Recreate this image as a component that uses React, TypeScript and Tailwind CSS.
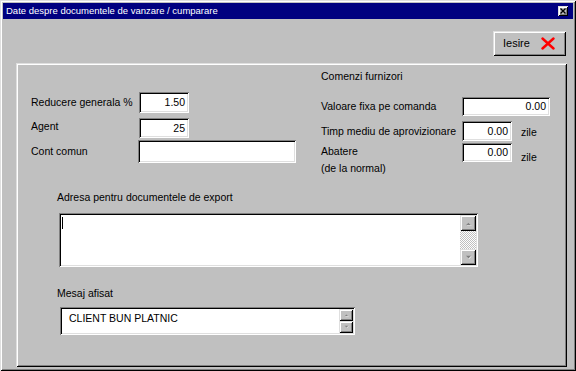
import React from "react";

const raised =
  "shadow-[inset_1px_1px_0_#dfdfdf,inset_-1px_-1px_0_#000000,inset_2px_2px_0_#ffffff,inset_-2px_-2px_0_#808080]";
const sunken =
  "shadow-[inset_1px_1px_0_#808080,inset_-1px_-1px_0_#ffffff,inset_2px_2px_0_#000000,inset_-2px_-2px_0_#dfdfdf]";

function Field({ w, h, value }: { w: string; h: string; value?: string }) {
  return (
    <div className={`${w} ${h} bg-white ${sunken} flex items-center justify-end pr-[4px] shrink-0`}>
      <span className="leading-none">{value}</span>
    </div>
  );
}

function Arrow({ up, size = 7 }: { up: boolean; size?: number }) {
  return (
    <svg width={size} height={Math.ceil(size / 2) + 1} viewBox="0 0 8 5">
      {up ? (
        <>
          <polygon points="1,4.5 7,4.5 4,1.5" fill="#ffffff" transform="translate(0.6,0.6)" />
          <polygon points="1,4.5 7,4.5 4,1.5" fill="#808080" />
        </>
      ) : (
        <>
          <polygon points="1,0.5 7,0.5 4,3.5" fill="#ffffff" transform="translate(0.6,0.6)" />
          <polygon points="1,0.5 7,0.5 4,3.5" fill="#808080" />
        </>
      )}
    </svg>
  );
}

export default function App() {
  return (
    <div
      className={`w-[576px] h-[371px] bg-[#c0c0c0] ${raised} p-[3px] flex flex-col text-black`}
      style={{ fontFamily: '"Liberation Sans", Arial, sans-serif', fontSize: "10.5px" }}
    >
      {/* Title bar */}
      <div className="h-[16px] bg-[#000080] flex items-center justify-between pl-[3px] pr-[5px] shrink-0">
        <span className="text-white leading-none text-[9.5px]">Date despre documentele de vanzare / cumparare</span>
        <div className={`w-[10px] h-[10px] bg-[#c0c0c0] ${raised} flex items-center justify-center`}>
          <svg width="6" height="6" viewBox="0 0 6 6">
            <path d="M0.5 0.5 L5.5 5.5 M5.5 0.5 L0.5 5.5" stroke="#000" strokeWidth="1.4" />
          </svg>
        </div>
      </div>

      {/* Button row */}
      <div className="flex justify-end pr-[7px] mt-[12px] shrink-0">
        <div className={`w-[73px] h-[25px] ${raised} flex items-center pl-[10px]`}>
          <span className="text-[11px] leading-none">Iesire</span>
          <svg className="ml-[11px]" width="14" height="13" viewBox="0 0 14 13">
            <path d="M1.5 1.5 L12.5 11.5 M12.5 1.5 L1.5 11.5" stroke="#ff0000" strokeWidth="2.4" strokeLinecap="round" />
          </svg>
        </div>
      </div>

      {/* Group panel */}
      <div className={`mt-[7px] ml-[13px] mr-[6px] mb-[1px] flex-1 ${raised} p-[2px] flex flex-col`}>
        {/* top section */}
        <div className="h-[112px] flex shrink-0">
          {/* left column */}
          <div className="ml-[13px] mt-[27px] w-[265px] flex flex-col">
            <div className="flex items-center">
              <span className="w-[108px] leading-none">Reducere generala %</span>
              <Field w="w-[50px]" h="h-[21px]" value="1.50" />
            </div>
            <div className="flex items-center mt-[5px]">
              <span className="w-[108px] leading-none -mt-[4px]">Agent</span>
              <Field w="w-[50px]" h="h-[20px]" value="25" />
            </div>
            <div className="flex items-center mt-[2px]">
              <span className="w-[107px] leading-none">Cont comun</span>
              <Field w="w-[158px]" h="h-[23px]" />
            </div>
          </div>

          {/* right column */}
          <div className="ml-[25px] mt-[5px] flex flex-col">
            <div className="h-[12px] leading-[12px]">Comenzi furnizori</div>
            <div className="flex items-center mt-[15px]">
              <span className="w-[141px] leading-none">Valoare fixa pe comanda</span>
              <Field w="w-[88px]" h="h-[19px]" value="0.00" />
            </div>
            <div className="flex items-center mt-[5px]">
              <span className="w-[141px] leading-none">Timp mediu de aprovizionare</span>
              <Field w="w-[50px]" h="h-[20px]" value="0.00" />
              <span className="ml-[9px] leading-none mt-[2px]">zile</span>
            </div>
            <div className="flex items-start mt-[2px]">
              <div className="w-[141px] leading-[17px] mt-[0px]">
                <div>Abatere</div>
                <div>(de la normal)</div>
              </div>
              <Field w="w-[50px]" h="h-[19px]" value="0.00" />
              <span className="ml-[9px] leading-none mt-[9px]">zile</span>
            </div>
          </div>
        </div>

        {/* Adresa */}
        <div className="ml-[39px] mt-[14px] leading-[12px]">Adresa pentru documentele de export</div>
        <div className={`ml-[41px] mt-[10px] w-[419px] h-[54px] bg-white ${sunken} flex p-[2px]`}>
          <div className="flex-1 relative">
            <span className="absolute left-[1px] top-[2px] w-[1px] h-[12px] bg-black" />
          </div>
          <div className="w-[16px] flex flex-col">
            <div className={`h-[16px] bg-[#c0c0c0] ${raised} flex items-center justify-center`}>
              <Arrow up />
            </div>
            <div className="flex-1 bg-[image:repeating-conic-gradient(#c0c0c0_0%_25%,#ffffff_0%_50%)] bg-[length:2px_2px]" />
            <div className={`h-[16px] bg-[#c0c0c0] ${raised} flex items-center justify-center`}>
              <Arrow up={false} />
            </div>
          </div>
        </div>

        {/* Mesaj */}
        <div className="ml-[39px] mt-[20px] leading-[12px]">Mesaj afisat</div>
        <div className={`ml-[42px] mt-[8px] w-[295px] h-[28px] bg-white ${sunken} flex p-[2px]`}>
          <div className="flex-1 pl-[7px] pt-[4px] leading-none">CLIENT BUN PLATNIC</div>
          <div className="w-[14px] flex flex-col">
            <div className={`h-[12px] bg-[#c0c0c0] ${raised} flex items-center justify-center`}>
              <Arrow up size={5} />
            </div>
            <div className={`h-[12px] bg-[#c0c0c0] ${raised} flex items-center justify-center`}>
              <Arrow up={false} size={5} />
            </div>
          </div>
        </div>
      </div>
    </div>
  );
}
